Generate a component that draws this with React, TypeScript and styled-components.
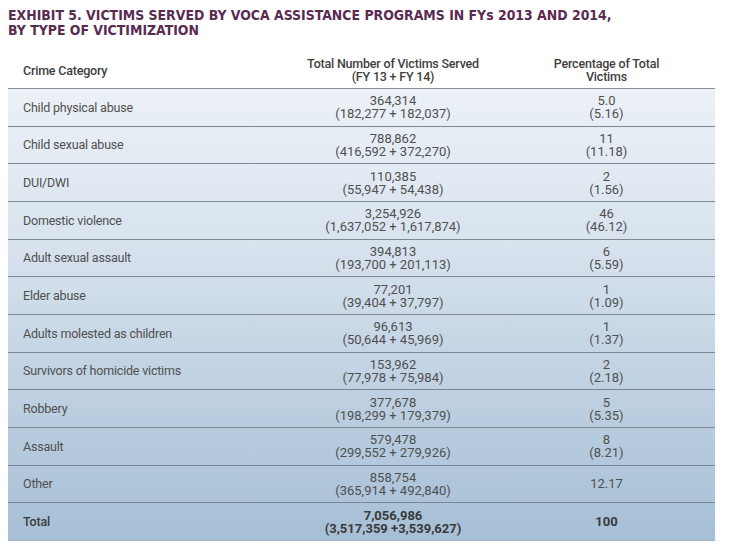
import React from "react";
import styled, { createGlobalStyle } from "styled-components";

const Global = createGlobalStyle`
  html, body { margin: 0; padding: 0; background: #ffffff; }
  body {
    width: 734px;
    height: 558px;
    overflow: hidden;
    font-family: Roboto, "Liberation Sans", sans-serif;
  }
`;

const Page = styled.div`
  padding: 8px 0 0 8px;
`;

const Title = styled.h1`
  margin: 0;
  font-family: "DejaVu Sans Condensed", "DejaVu Sans", sans-serif;
  font-weight: 700;
  font-size: 13.9px;
  line-height: 15px;
  letter-spacing: 0;
  color: #5a2b51;
`;

const Table = styled.div`
  margin-top: 15px;
  width: 707px;
`;

const COLS = "280px 210px 217px";

const HeaderRow = styled.div`
  display: grid;
  grid-template-columns: ${COLS};
  height: 36px;
  align-items: center;
  border-bottom: 1px solid #8c8c8c;
  box-sizing: border-box;
  padding-bottom: 1px;
`;

const HeadCell = styled.div<{ $align?: "left" | "center" }>`
  font-size: 12.5px;
  line-height: 13px;
  font-weight: 500;
  letter-spacing: -0.2px;
  color: #3f3f3f;
  text-align: ${(p) => p.$align ?? "center"};
  padding-left: ${(p) => (p.$align === "left" ? "15px" : "0")};
`;

const Body = styled.div`
  background: linear-gradient(180deg, #ecf1f7 0%, #dbe5ef 30%, #c4d4e4 60%, #a6bfd6 100%);
`;

const Row = styled.div<{ $last?: boolean }>`
  display: grid;
  grid-template-columns: ${COLS};
  height: 37.67px;
  align-items: center;
  box-sizing: border-box;
  border-bottom: 1px solid ${(p) => (p.$last ? "#a6b3c0" : "#7d8893")};
`;

const Label = styled.div<{ $bold?: boolean }>`
  padding-left: 15px;
  font-size: 12.5px;
  letter-spacing: -0.2px;
  font-weight: ${(p) => (p.$bold ? 500 : 400)};
  color: ${(p) => (p.$bold ? "#3a3a3a" : "#505050")};
`;

const Num = styled.div<{ $bold?: boolean }>`
  text-align: center;
  font-size: 13px;
  line-height: 13px;
  font-weight: ${(p) => (p.$bold ? 700 : 400)};
  color: ${(p) => (p.$bold ? "#3a3a3a" : "#505050")};
`;

type Item = { label: string; total: string; split: string; pct: string; pct2?: string };

const rows: Item[] = [
  { label: "Child physical abuse", total: "364,314", split: "(182,277 + 182,037)", pct: "5.0", pct2: "(5.16)" },
  { label: "Child sexual abuse", total: "788,862", split: "(416,592 + 372,270)", pct: "11", pct2: "(11.18)" },
  { label: "DUI/DWI", total: "110,385", split: "(55,947 + 54,438)", pct: "2", pct2: "(1.56)" },
  { label: "Domestic violence", total: "3,254,926", split: "(1,637,052 + 1,617,874)", pct: "46", pct2: "(46.12)" },
  { label: "Adult sexual assault", total: "394,813", split: "(193,700 + 201,113)", pct: "6", pct2: "(5.59)" },
  { label: "Elder abuse", total: "77,201", split: "(39,404 + 37,797)", pct: "1", pct2: "(1.09)" },
  { label: "Adults molested as children", total: "96,613", split: "(50,644 + 45,969)", pct: "1", pct2: "(1.37)" },
  { label: "Survivors of homicide victims", total: "153,962", split: "(77,978 + 75,984)", pct: "2", pct2: "(2.18)" },
  { label: "Robbery", total: "377,678", split: "(198,299 + 179,379)", pct: "5", pct2: "(5.35)" },
  { label: "Assault", total: "579,478", split: "(299,552 + 279,926)", pct: "8", pct2: "(8.21)" },
  { label: "Other", total: "858,754", split: "(365,914 + 492,840)", pct: "12.17" },
];

export default function App() {
  return (
    <>
      <Global />
      <Page>
        <Title>
          EXHIBIT 5. VICTIMS SERVED BY VOCA ASSISTANCE PROGRAMS IN FYs 2013 AND 2014,
          <br />
          BY TYPE OF VICTIMIZATION
        </Title>
        <Table>
          <HeaderRow>
            <HeadCell $align="left">Crime Category</HeadCell>
            <HeadCell>
              Total Number of Victims Served
              <br />
              (FY 13 + FY 14)
            </HeadCell>
            <HeadCell>
              Percentage of Total
              <br />
              Victims
            </HeadCell>
          </HeaderRow>
          <Body>
            {rows.map((r) => (
              <Row key={r.label}>
                <Label>{r.label}</Label>
                <Num>
                  {r.total}
                  <br />
                  {r.split}
                </Num>
                <Num>
                  {r.pct}
                  {r.pct2 && (
                    <>
                      <br />
                      {r.pct2}
                    </>
                  )}
                </Num>
              </Row>
            ))}
            <Row $last>
              <Label $bold>Total</Label>
              <Num $bold>
                7,056,986
                <br />
                (3,517,359 +3,539,627)
              </Num>
              <Num $bold>100</Num>
            </Row>
          </Body>
        </Table>
      </Page>
    </>
  );
}
